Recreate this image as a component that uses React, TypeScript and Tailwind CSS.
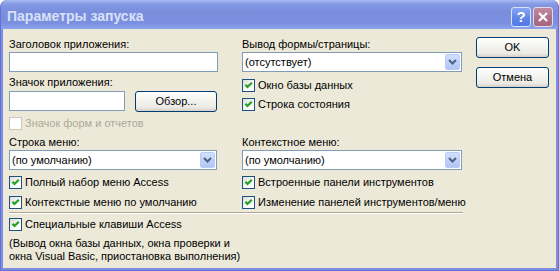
import React from "react";

function Check({ checked = true, disabled = false }: { checked?: boolean; disabled?: boolean }) {
  return (
    <span
      className={
        disabled
          ? "w-[13px] h-[13px] shrink-0 border border-[#CAC8BB] bg-white"
          : "w-[13px] h-[13px] shrink-0 border border-[#1C5180] bg-[linear-gradient(135deg,#DCDCD7_0%,#FFFFFF_70%)] flex items-center justify-center"
      }
    >
      {checked && !disabled && (
        <svg width="11" height="11" viewBox="0 0 11 11">
          <path d="M2.5 4.8 L4.5 7 L8.8 2.7" stroke="#21A121" strokeWidth="2.2" fill="none" />
        </svg>
      )}
    </span>
  );
}

function CheckRow({ label, disabled = false, className = "" }: { label: string; disabled?: boolean; className?: string }) {
  return (
    <div className={"flex items-center gap-[3px] h-[13px] " + className}>
      <Check disabled={disabled} />
      <span className={disabled ? "text-[#ACA899] whitespace-nowrap" : "whitespace-nowrap"}>{label}</span>
    </div>
  );
}

function Combo({ value, className = "" }: { value: string; className?: string }) {
  return (
    <div className={"h-[20px] border border-[#7F9DB9] bg-white flex items-stretch " + className}>
      <span className="flex-1 pl-[2px] flex items-center whitespace-nowrap">{value}</span>
      <span className="w-[15px] m-[1px] rounded-[2px] border border-[#BACCF5] bg-[linear-gradient(to_bottom,#D3E0FB_0%,#BCCFF8_60%,#B1C6F5_100%)] flex items-center justify-center">
        <svg width="9" height="6" viewBox="0 0 9 6">
          <path d="M1 1 L4.5 4.5 L8 1" stroke="#4D6185" strokeWidth="2" fill="none" />
        </svg>
      </span>
    </div>
  );
}

function XPButton({ label, className = "" }: { label: string; className?: string }) {
  return (
    <div
      className={
        "h-[21px] rounded-[3px] border border-[#003C74] bg-[linear-gradient(to_bottom,#FFFFFF_0%,#F4F4F0_40%,#ECEBE6_80%,#D6D0C5_100%)] flex items-center justify-center " +
        className
      }
    >
      {label}
    </div>
  );
}

export default function App() {
  return (
    <div className="w-[559px] h-[271px] flex flex-col rounded-t-[7px] overflow-hidden bg-[#7D8DDF] border-x border-b border-[#6470D4] font-['Liberation_Sans',Arial,sans-serif]">
      <div className="h-[29px] shrink-0 flex items-center pt-[4px] pl-[6px] pr-[5px] bg-[linear-gradient(to_bottom,#A9BBF2_0%,#8399E3_14%,#7A8EDE_40%,#7B8FE0_80%,#8CA3EC_100%)]">
        <span className="flex-1 text-[14px] leading-[15px] font-bold text-[#D8E1F7] whitespace-nowrap">
          Параметры запуска
        </span>
        <div className="flex gap-[2px]">
          <div className="w-[20px] h-[20px] rounded-[3px] border border-[#D9E3F8] bg-[linear-gradient(to_bottom,#86A6F4_0%,#5F83E8_60%,#5379E4_100%)] flex items-center justify-center text-white font-bold text-[15px] leading-none">
            ?
          </div>
          <div className="w-[20px] h-[20px] rounded-[3px] border border-[#E6D9E3] bg-[linear-gradient(to_bottom,#C08A9D_0%,#AE7086_60%,#A6687E_100%)] flex items-center justify-center">
            <svg width="12" height="12" viewBox="0 0 12 12">
              <path d="M2 2 L10 10 M10 2 L2 10" stroke="white" strokeWidth="2.2" />
            </svg>
          </div>
        </div>
      </div>
      <div className="flex-1 mx-[2px] mb-[2px] bg-[#ECE9D8] flex pl-[6px] pt-[8px] pr-[7px] text-[11px] leading-[13px] text-black">
        <div className="w-[454px] pt-[1px]">
          <div className="grid grid-cols-[209px_220px] gap-x-[24px]">
            <div className="flex flex-col">
              <div>Заголовок приложения:</div>
              <div className="mt-[1px] h-[20px] border border-[#7F9DB9] bg-white" />
              <div className="mt-[4px]">Значок приложения:</div>
              <div className="mt-[2px] flex">
                <div className="w-[116px] h-[20px] border border-[#7F9DB9] bg-white" />
                <XPButton label="Обзор..." className="ml-[10px] w-[82px] h-[20px]" />
              </div>
              <CheckRow label="Значок форм и отчетов" disabled className="mt-[5px]" />
            </div>
            <div className="flex flex-col">
              <div>Вывод формы/страницы:</div>
              <Combo value="(отсутствует)" className="mt-[1px]" />
              <CheckRow label="Окно базы данных" className="mt-[7px]" />
              <CheckRow label="Строка состояния" className="mt-[6px]" />
            </div>
            <div className="flex flex-col mt-[6px]">
              <div>Строка меню:</div>
              <Combo value="(по умолчанию)" className="mt-[1px] w-[208px]" />
              <CheckRow label="Полный набор меню Access" className="mt-[6px]" />
              <CheckRow label="Контекстные меню по умолчанию" className="mt-[7px]" />
            </div>
            <div className="flex flex-col mt-[6px]">
              <div>Контекстное меню:</div>
              <Combo value="(по умолчанию)" className="mt-[1px]" />
              <CheckRow label="Встроенные панели инструментов" className="mt-[6px]" />
              <CheckRow label="Изменение панелей инструментов/меню" className="mt-[7px]" />
            </div>
          </div>
          <div className="mt-[3px] h-[2px] border-t border-[#ACA899] border-b border-b-white" />
          <CheckRow label="Специальные клавиши Access" className="mt-[4px]" />
          <div className="mt-[6px] leading-[13px]">
            (Вывод окна базы данных, окна проверки и
            <br />
            окна Visual Basic, приостановка выполнения)
          </div>
        </div>
        <div className="ml-[13px] flex flex-col gap-[9px]">
          <XPButton label="OK" className="w-[73px]" />
          <XPButton label="Отмена" className="w-[73px]" />
        </div>
      </div>
    </div>
  );
}
